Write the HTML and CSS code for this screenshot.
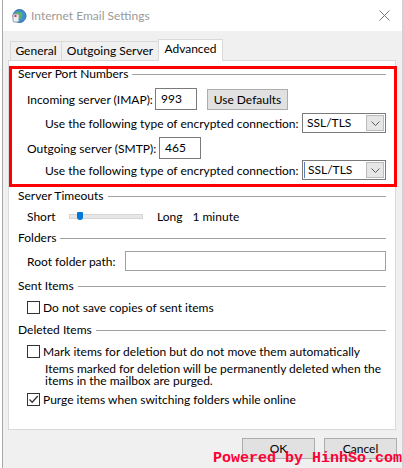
FILE: index.html
```html
<!DOCTYPE html>
<html>
<head>
<meta charset="utf-8">
<link rel="stylesheet" href="styles.css">
</head>
<body>
<div class="window">
  <div class="titlebar">
    <svg class="appicon" width="16" height="16" viewBox="0 0 16 16">
      <circle cx="8.5" cy="8" r="6.5" fill="#3f8fd0"/>
      <path d="M4 5 Q7 3 11 5 Q12 8 10 11 Q7 12 5 10 Z" fill="#5fb65a"/>
      <circle cx="8.5" cy="8" r="6.5" fill="none" stroke="#2c6ea8" stroke-width="1"/>
      <rect x="2" y="6" width="6" height="8" rx="1" fill="#e8eef4" stroke="#7a8ea4" stroke-width="0.8"/>
      <rect x="3.5" y="7" width="2" height="2" fill="#d33"/>
    </svg>
    <span class="title">Internet Email Settings</span>
    <svg class="close" width="11" height="11" viewBox="0 0 11 11">
      <path d="M0.5 0.5 L10.5 10.5 M10.5 0.5 L0.5 10.5" stroke="#7a7a7a" stroke-width="1"/>
    </svg>
  </div>

  <div class="tabs">
    <div class="tab t-gen">General</div>
    <div class="tab t-out">Outgoing Server</div>
    <div class="tab t-adv active">Advanced</div>
  </div>

  <div class="panel">
    <div class="group g1"><span>Server Port Numbers</span><i></i></div>
    <div class="row r-imap">
      <span class="lbl l-imap">Incoming server (IMAP):</span>
      <span class="input port">993</span>
      <span class="btn defaults">Use Defaults</span>
    </div>
    <div class="row r-enc">
      <span class="lbl ind">Use the following type of encrypted connection:</span>
      <span class="select"><span class="val">SSL/TLS</span><span class="drop"><svg width="9" height="5" viewBox="0 0 9 5"><path d="M0.5 0.5 L4.5 4.5 L8.5 0.5" fill="none" stroke="#5a5a5a" stroke-width="1"/></svg></span></span>
    </div>
    <div class="row r-smtp">
      <span class="lbl l-smtp">Outgoing server (SMTP):</span>
      <span class="input port">465</span>
    </div>
    <div class="row r-enc2">
      <span class="lbl ind">Use the following type of encrypted connection:</span>
      <span class="select"><span class="val caret">SSL/TLS</span><span class="drop"><svg width="9" height="5" viewBox="0 0 9 5"><path d="M0.5 0.5 L4.5 4.5 L8.5 0.5" fill="none" stroke="#5a5a5a" stroke-width="1"/></svg></span></span>
    </div>

    <div class="group g2"><span>Server Timeouts</span><i></i></div>
    <div class="row r-slider">
      <span class="lbl l-short">Short</span>
      <span class="slider"><span class="thumb"></span></span>
      <span class="long">Long</span>
      <span class="minute">1 minute</span>
    </div>

    <div class="group g3"><span>Folders</span><i></i></div>
    <div class="row r-root">
      <span class="lbl">Root folder path:</span>
      <span class="input path"></span>
    </div>

    <div class="group g4"><span>Sent Items</span><i></i></div>
    <div class="row r-sent">
      <span class="check"></span>
      <span>Do not save copies of sent items</span>
    </div>

    <div class="group g5"><span>Deleted Items</span><i></i></div>
    <div class="row r-mark">
      <span class="check"></span>
      <span>Mark items for deletion but do not move them automatically</span>
    </div>
    <div class="note">Items marked for deletion will be permanently deleted when the items in the mailbox are purged.</div>
    <div class="row r-purge">
      <span class="check checked"><svg width="11" height="11" viewBox="0 0 11 11"><path d="M1.5 5.5 L4.2 8.3 L9.8 2" fill="none" stroke="#333" stroke-width="1.3"/></svg></span>
      <span>Purge items when switching folders while online</span>
    </div>
  </div>

  <div class="footer">
    <span class="btn dlg">OK</span>
    <span class="btn dlg">Cancel</span>
  </div>

  <div class="highlight"></div>
  <div class="watermark">Powered by HinhSo.com</div>
</div>
</body>
</html>
```

FILE: styles.css
```css
* { box-sizing: border-box; }
html, body { margin: 0; padding: 0; background: #ffffff; }
body {
  font-family: Lato, "Liberation Sans", sans-serif;
  font-size: 12px;
  color: #000;
  width: 403px;
  height: 468px;
  overflow: hidden;
}
.window {
  position: relative;
  width: 401px;
  height: 468px;
  margin-left: 2px;
  background: #f0f0f0;
  border-left: 1px solid #a8a8a8;
  border-right: 1px solid #d0d0d0;
  white-space: nowrap;
}
.titlebar {
  height: 31px;
  background: #fff;
  display: flex;
  align-items: center;
  padding-left: 8px;
}
.appicon { flex: none; }
.title {
  margin-left: 4px;
  font-size: 12px;
  color: #9a9a9a;
  flex: 1;
}
.close { margin-right: 12px; flex: none; }

.tabs {
  display: flex;
  align-items: flex-end;
  height: 29px;
  padding-left: 7px;
}
.tab {
  height: 19px;
  border: 1px solid #d9d9d9;
  border-bottom: none;
  background: #f0f0f0;
  line-height: 18px;
  text-align: center;
  margin-right: -1px;
}
.t-gen { width: 52px; }
.t-out { width: 98px; }
.t-adv { width: 65px; }
.tab.active {
  height: 22px;
  background: #fff;
  position: relative;
  z-index: 2;
  line-height: 18px;
  margin-bottom: -1px;
}
.panel {
  margin-left: 5px;
  width: 388px;
  height: 370px;
  background: #fff;
  border: 1px solid #d9d9d9;
  padding-left: 9px;
  padding-right: 9px;
}
.group {
  display: flex;
  align-items: center;
  height: 16px;
  line-height: 16px;
}
.group i {
  flex: 1;
  height: 1px;
  background: #a0a0a0;
  margin-left: 4px;
  margin-top: 1px;
}
.g1 { margin-top: 5px; }
.g2 { margin-top: 8px; }
.g3 { margin-top: 4px; }
.g4 { margin-top: 7px; }
.g5 { margin-top: 7px; }

.row {
  display: flex;
  align-items: center;
}
.lbl { margin-left: 9px; }
.lbl.ind { margin-left: 27px; }
.l-imap { width: 128px; flex: none; }
.l-smtp { width: 132px; flex: none; }

.input {
  display: inline-block;
  background: #fff;
  border: 1px solid #7a7a7a;
  height: 22px;
  line-height: 20px;
}
.port { width: 42px; padding-left: 5px; }
.r-imap { height: 22px; margin-top: 6px; }
.r-smtp { height: 22px; margin-top: 4px; }

.btn {
  display: inline-flex;
  align-items: center;
  justify-content: center;
  background: #e1e1e1;
  border: 1px solid #adadad;
}
.defaults { margin-left: 10px; width: 81px; height: 21px; }

.r-enc { height: 20px; margin-top: 3px; }
.r-enc2 { height: 20px; margin-top: 1px; }
.select {
  margin-left: auto;
  width: 84px;
  height: 20px;
  border: 1px solid #7a7a7a;
  background: #fff;
  display: flex;
  align-items: center;
  padding-right: 1px;
}
.select .val { flex: 1; padding-left: 4px; line-height: 16px; }
.select .val.caret { border-left: 1px solid #5a7fb5; padding-left: 3px; margin-left: 1px; }
.select .drop {
  width: 18px;
  height: 16px;
  background: #e6e6e6;
  border: 1px solid #bcbcbc;
  display: flex;
  align-items: center;
  justify-content: center;
}

.r-slider { height: 20px; margin-top: 2px; }
.l-short { width: 33px; flex: none; }
.slider {
  position: relative;
  margin-left: 9px;
  width: 74px;
  height: 5px;
  background: #e7e7e7;
  border: 1px solid #d6d6d6;
}
.thumb {
  position: absolute;
  left: 7px;
  top: -3px;
  width: 6px;
  height: 8px;
  background: #0078d7;
  border-radius: 1px 1px 3px 3px;
}
.long { margin-left: 14px; }
.minute { margin-left: 10px; }

.r-root { height: 20px; margin-top: 5px; }
.path { margin-left: auto; width: 261px; height: 20px; border-color: #a0a0a0; }

.r-sent, .r-mark, .r-purge { height: 16px; }
.r-sent { margin-top: 5px; }
.r-mark { margin-top: 5px; }
.r-purge { margin-top: 4px; }
.check {
  flex: none;
  width: 13px;
  height: 13px;
  border: 1px solid #333;
  background: #fff;
  margin-left: 9px;
  margin-right: 3px;
  display: flex;
  align-items: center;
  justify-content: center;
}
.note {
  margin-left: 27px;
  margin-top: 4px;
  line-height: 12px;
  width: 345px;
  white-space: normal;
}

.footer {
  display: flex;
  justify-content: flex-end;
  gap: 9px;
  padding-right: 5px;
  margin-top: 8px;
  height: 21px;
}
.dlg { width: 73px; height: 21px; }

.highlight {
  position: absolute;
  left: 6px;
  top: 66px;
  width: 388px;
  height: 121px;
  border: 3px solid #ff0000;
}
.watermark {
  position: absolute;
  left: 210px;
  top: 450px;
  font-family: "Liberation Mono", monospace;
  font-weight: bold;
  font-size: 15px;
  line-height: 18px;
  color: #ff0033;
  white-space: nowrap;
}
```
